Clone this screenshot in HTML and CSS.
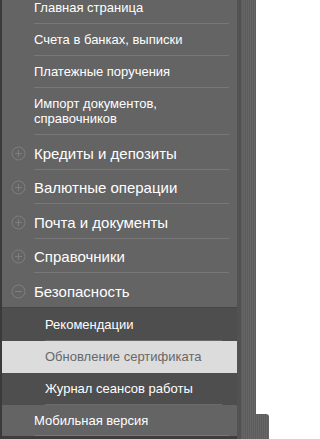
FILE: index.html
```html
<!DOCTYPE html>
<html lang="ru">
<head>
<meta charset="utf-8">
<title>Меню</title>
<link rel="stylesheet" href="styles.css">
</head>
<body>
<div class="page">
  <nav class="panel">
    <ul class="menu">
      <li class="item"><span class="gutter"></span><a class="link" href="#">Главная страница</a></li>
      <li class="item"><span class="gutter"></span><a class="link" href="#">Счета в банках, выписки</a></li>
      <li class="item"><span class="gutter"></span><a class="link" href="#">Платежные поручения</a></li>
      <li class="item"><span class="gutter"></span><a class="link" href="#">Импорт документов, справочников</a></li>
      <li class="item group">
        <span class="gutter"><svg class="icon" viewBox="0 0 15 15" width="15" height="15"><circle cx="7.5" cy="7.5" r="6.5"/><path d="M4 7.5h7M7.5 4v7"/></svg></span>
        <a class="link" href="#">Кредиты и депозиты</a></li>
      <li class="item group">
        <span class="gutter"><svg class="icon" viewBox="0 0 15 15" width="15" height="15"><circle cx="7.5" cy="7.5" r="6.5"/><path d="M4 7.5h7M7.5 4v7"/></svg></span>
        <a class="link" href="#">Валютные операции</a></li>
      <li class="item group">
        <span class="gutter"><svg class="icon" viewBox="0 0 15 15" width="15" height="15"><circle cx="7.5" cy="7.5" r="6.5"/><path d="M4 7.5h7M7.5 4v7"/></svg></span>
        <a class="link" href="#">Почта и документы</a></li>
      <li class="item group">
        <span class="gutter"><svg class="icon" viewBox="0 0 15 15" width="15" height="15"><circle cx="7.5" cy="7.5" r="6.5"/><path d="M4 7.5h7M7.5 4v7"/></svg></span>
        <a class="link" href="#">Справочники</a></li>
      <li class="item group open">
        <span class="gutter"><svg class="icon" viewBox="0 0 15 15" width="15" height="15"><circle cx="7.5" cy="7.5" r="6.5"/><path d="M4 7.5h7"/></svg></span>
        <a class="link" href="#">Безопасность</a></li>
      <li class="submenu">
        <ul class="sublist">
          <li class="subitem"><a class="sublink" href="#">Рекомендации</a></li>
          <li class="subitem active"><a class="sublink" href="#">Обновление сертификата</a></li>
          <li class="subitem"><a class="sublink" href="#">Журнал сеансов работы</a></li>
        </ul>
      </li>
      <li class="item mobile"><span class="gutter"></span><a class="link" href="#">Мобильная версия</a></li>
    </ul>
  </nav>
  <div class="edge"></div>
  <div class="band">
    <div class="band-top"></div>
    <div class="band-bottom"></div>
  </div>
</div>
</body>
</html>
```
FILE: styles.css
```css
html, body {
  margin: 0;
  padding: 0;
  background: #ffffff;
  overflow: hidden;
}

.page {
  display: flex;
  height: 439px;
  font-family: "Liberation Sans", Arial, sans-serif;
}

.panel {
  width: 237px;
  box-sizing: border-box;
  border-left: 2px solid #3a3a3a;
  background: #3d3d3d;
  overflow: hidden;
  flex: none;
}

.menu {
  list-style: none;
  margin: -8px 0 0;
  padding: 0;
}

.item {
  display: flex;
  background: #646464;
}

.gutter {
  width: 32px;
  flex: none;
  display: flex;
  justify-content: center;
  align-items: center;
}

.link {
  flex: 1;
  margin-right: 8px;
  padding: 8px 0;
  font-size: 13px;
  line-height: 15px;
  color: #ffffff;
  text-decoration: none;
  border-bottom: 1px solid #787878;
}

.group .gutter {
  align-items: flex-start;
  padding-top: 10.5px;
}

.group .link {
  font-size: 15px;
  line-height: 17px;
  padding: 9.5px 0 7px;
}

.group.open .link {
  border-bottom: none;
}

.icon {
  display: block;
  fill: none;
  stroke: #7e7e7e;
  stroke-width: 1;
}

.submenu {
  background: #4e4e4e;
  border-top: 1px solid #474747;
  padding-top: 1px;
}

.sublist {
  list-style: none;
  margin: 0;
  padding: 0;
}

.subitem {
  display: flex;
}

.sublink {
  flex: 1;
  margin-left: 43px;
  margin-right: 15px;
  padding: 8px 0;
  font-size: 13px;
  line-height: 15px;
  color: #ffffff;
  text-decoration: none;
  border-bottom: 1px solid #6a6a6a;
}

.subitem.active {
  background: #dcdcdc;
}

.subitem.active .sublink {
  color: #686868;
  border-bottom-color: #dcdcdc;
}

.mobile .link {
  padding: 8px 0 7px;
}

.edge {
  width: 4px;
  flex: none;
  background: #525252;
}

.band {
  width: 28px;
  flex: none;
  display: flex;
  flex-direction: column;
}

.band-top {
  flex: 1;
  width: 15px;
  background: repeating-linear-gradient(90deg, #5c5c5c 0 1px, #666666 1px 2px);
}

.band-bottom {
  height: 25px;
  width: 28px;
  border-top-right-radius: 3px;
  background: repeating-linear-gradient(90deg, #5c5c5c 0 1px, #666666 1px 2px);
}
```
